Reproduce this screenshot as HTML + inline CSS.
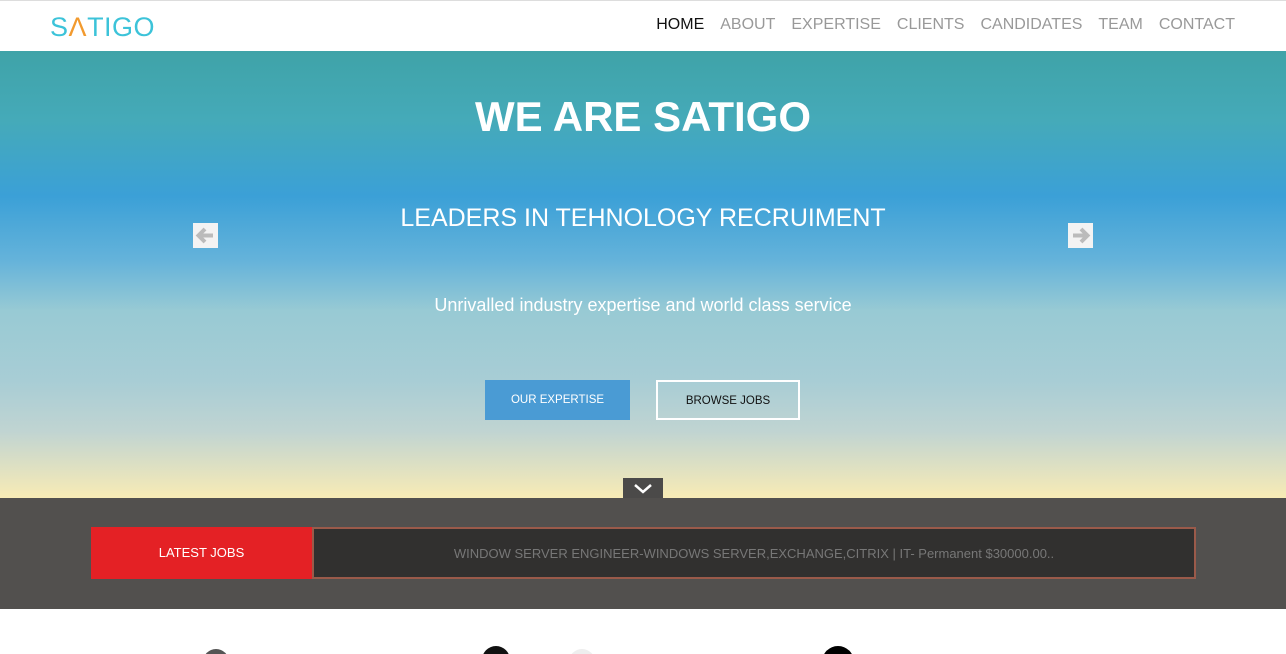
<!DOCTYPE html>
<html><head><style>
*{margin:0;padding:0;box-sizing:border-box}
body{width:1286px;height:654px;overflow:hidden;background:#fff;font-family:"Liberation Sans",sans-serif}
.top{position:absolute;top:0;left:0;width:1286px;height:51px;background:#fff;border-top:1px solid #ddd}
.logo{position:absolute;left:50px;top:11px;font-size:27px;letter-spacing:0.5px;color:#3cc3d9;font-weight:300}
.logo b{color:#f29a2e;font-weight:300}
nav{position:absolute;right:51px;top:15px;font-size:16px;color:#999}
nav span{margin-left:16px}
nav span.a{color:#111}
.hero{position:absolute;top:51px;left:0;width:1286px;height:447px;background:linear-gradient(#3fa3a8 0px,#45aab9 70px,#3ba0d7 145px,#65b3da 210px,#98cad4 260px,#a8cdd5 330px,#c0d4d2 380px,#f8ebb5 447px);color:#fff;text-align:center}
h1{position:absolute;top:42px;width:100%;font-size:42px;font-weight:bold}
h2{position:absolute;top:153px;width:100%;font-size:25px;font-weight:normal}
p.s{position:absolute;top:244px;width:100%;font-size:18px}
.arr{position:absolute;top:172px;width:25px;height:25px;background:#f3f3f3}
.b1{position:absolute;left:485px;top:329px;width:145px;height:40px;background:#4a9bd4;color:#fff;font-size:11.5px;line-height:40px}
.b2{position:absolute;left:656px;top:329px;width:144px;height:40px;border:2px solid #fff;color:#111;font-size:11.5px;line-height:38px}
.dn{position:absolute;left:623px;top:478px;width:40px;height:20px;background:#4b4a49}
.dark{position:absolute;top:498px;left:0;width:1286px;height:111px;background:#52504e}
.lj{position:absolute;left:91px;top:29px;width:221px;height:52px;background:#e42125;color:#fff;font-size:13px;text-align:center;line-height:52px}
.tk{position:absolute;left:312px;top:29px;width:884px;height:52px;background:#31302f;border:2px solid #9a5a4a;color:#777;font-size:13px;text-align:center;line-height:49px}
</style></head><body>
<div class="top"><div class="logo">S<b>Λ</b>TIGO</div>
<nav><span class="a">HOME</span><span>ABOUT</span><span>EXPERTISE</span><span>CLIENTS</span><span>CANDIDATES</span><span>TEAM</span><span>CONTACT</span></nav></div>
<div class="hero">
<h1>WE ARE SATIGO</h1>
<h2>LEADERS IN TEHNOLOGY RECRUIMENT</h2>
<p class="s">Unrivalled industry expertise and world class service</p>
<div class="arr" style="left:193px"><svg width="25" height="25"><path d="M20 12.5H7M12 6l-6.5 6.5L12 19" stroke="#bbb" stroke-width="4" fill="none"/></svg></div>
<div class="arr" style="left:1068px"><svg width="25" height="25"><path d="M5 12.5H18M13 6l6.5 6.5L13 19" stroke="#bbb" stroke-width="4" fill="none"/></svg></div>
<div class="b1">OUR EXPERTISE</div>
<div class="b2">BROWSE JOBS</div>
</div>
<div class="dn"><svg width="40" height="20"><path d="M12 7l8 7 8-7" stroke="#fff" stroke-width="2.5" fill="none"/></svg></div>
<div class="dark"><div class="lj">LATEST JOBS</div><div class="tk">WINDOW SERVER ENGINEER-WINDOWS SERVER,EXCHANGE,CITRIX | IT- Permanent $30000.00..</div></div>
<svg style="position:absolute;left:0;top:640px" width="1286" height="14">
<circle cx="216" cy="22" r="13" fill="#555"/>
<circle cx="496" cy="20" r="14" fill="#111"/>
<circle cx="582" cy="22" r="13" fill="#eee"/>
<circle cx="838" cy="22" r="16" fill="#000"/>
</svg>
</body></html>
